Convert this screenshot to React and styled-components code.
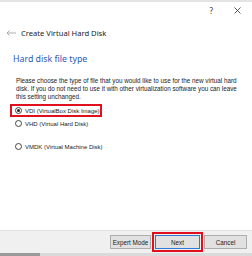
import React from 'react';
import styled, { createGlobalStyle } from 'styled-components';

const GlobalStyle = createGlobalStyle`
  html, body {
    margin: 0;
    padding: 0;
    background: #fff;
  }
`;

const Window = styled.div`
  width: 252px;
  height: 256px;
  display: flex;
  flex-direction: column;
  background: #fff;
  font-family: 'Liberation Sans', Arial, sans-serif;
  color: #1a1a1a;
  overflow: hidden;
`;

const TopStrip = styled.div`
  height: 2px;
  background: #e4e4e4;
`;

const TitleBar = styled.div`
  height: 17px;
  display: flex;
  justify-content: flex-end;
  align-items: center;
  gap: 21px;
  padding-right: 11px;
  font-family: 'Noto Sans', sans-serif;
  font-size: 8px;
  color: #333;
`;

const HeaderRow = styled.div`
  display: flex;
  align-items: center;
  height: 28px;
  padding-left: 6px;
  gap: 5px;
  font-family: 'Noto Sans', 'Open Sans', sans-serif;
  font-size: 7.6px;
  color: #222;
`;

const Content = styled.div`
  flex: 1;
  display: flex;
  flex-direction: column;
  align-items: flex-start;
  padding: 6px 12px 0 13px;
`;

const Heading = styled.div`
  font-family: 'Noto Sans', 'Open Sans', sans-serif;
  font-size: 8.8px;
  color: #2a5bb0;
  line-height: 12px;
`;

const Paragraph = styled.p`
  width: 224px;
  margin: 12px 0 3px 3px;
  font-size: 6.3px;
  line-height: 8px;
  color: #222;
`;

const Option = styled.label`
  box-sizing: border-box;
  display: flex;
  align-items: center;
  gap: 3px;
  height: 13px;
  width: ${(p) => (p.highlight ? '92px' : 'auto')};
  margin-left: ${(p) => (p.highlight ? '-3px' : '0')};
  padding-left: ${(p) => (p.highlight ? '3px' : '0')};
  border: ${(p) => (p.highlight ? '2px solid #e0101e' : '2px solid transparent')};
  margin-top: ${(p) => p.space || 0}px;
  font-size: 6px;
  white-space: nowrap;
  color: #222;
`;

const Radio = styled.span`
  flex: none;
  width: 5px;
  height: 5px;
  border: 1px solid #444;
  border-radius: 50%;
  display: flex;
  align-items: center;
  justify-content: center;
  background: #fff;
  &::after {
    content: '';
    width: 3px;
    height: 3px;
    border-radius: 50%;
    background: ${(p) => (p.checked ? '#222' : 'transparent')};
  }
`;

const Footer = styled.div`
  height: 22px;
  background: #f0f0f0;
  border-top: 1px solid #e2e2e2;
  display: flex;
  align-items: center;
  justify-content: flex-end;
  padding-right: 5px;
  gap: 1px;
`;

const Button = styled.button`
  height: 14px;
  width: ${(p) => p.w}px;
  padding: 0;
  border: 1px solid ${(p) => (p.primary ? '#2a7ad6' : '#adadad')};
  background: #e1e1e1;
  font-family: 'Liberation Sans', Arial, sans-serif;
  font-size: 6.3px;
  color: #222;
`;

const Highlight = styled.div`
  border: 2px solid #e0101e;
  padding: 1px;
  display: flex;
`;

const BottomStrip = styled.div`
  height: 3px;
  background: #dadada;
  display: flex;
`;

const ScrollThumb = styled.div`
  width: 40px;
  background: #9a9a9a;
`;

const App = () => (
  <Window>
    <GlobalStyle />
    <TopStrip />
    <TitleBar>
      <span>?</span>
      <svg width="7" height="7" viewBox="0 0 7 7">
        <path d="M0.5 0.5 L6.5 6.5 M6.5 0.5 L0.5 6.5" stroke="#333" strokeWidth="0.8" />
      </svg>
    </TitleBar>
    <HeaderRow>
      <svg width="10" height="6" viewBox="0 0 10 6">
        <path d="M1 3 H10 M3.5 0.5 L1 3 L3.5 5.5" stroke="#999" strokeWidth="0.8" fill="none" />
      </svg>
      <span>Create Virtual Hard Disk</span>
    </HeaderRow>
    <Content>
      <Heading>Hard disk file type</Heading>
      <Paragraph>
        Please choose the type of file that you would like to use for the new virtual hard
        disk. If you do not need to use it with other virtualization software you can leave
        this setting unchanged.
      </Paragraph>
      <Option highlight>
        <Radio checked />
        VDI (VirtualBox Disk Image)
      </Option>
      <Option>
        <Radio />
        VHD (Virtual Hard Disk)
      </Option>
      <Option space={10}>
        <Radio />
        VMDK (Virtual Machine Disk)
      </Option>
    </Content>
    <Footer>
      <Button w={41}>Expert Mode</Button>
      <Highlight>
        <Button primary w={45}>Next</Button>
      </Highlight>
      <Button w={43}>Cancel</Button>
    </Footer>
    <BottomStrip>
      <ScrollThumb />
    </BottomStrip>
  </Window>
);

export default App;
